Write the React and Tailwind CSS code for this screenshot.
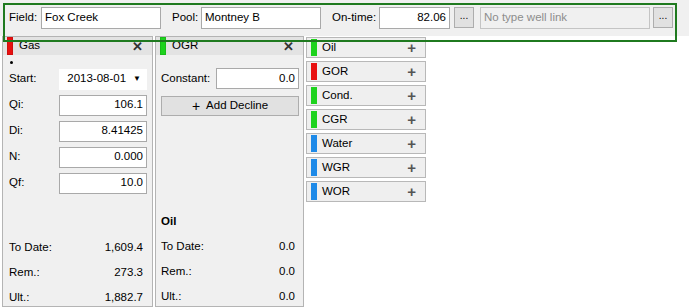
import React from "react";

const font = { fontFamily: '"Liberation Sans", Arial, sans-serif' };

function Input({ value, className = "" }) {
  return (
    <div className={`h-[21px] bg-white border border-[#a9a9a9] flex items-center justify-end px-[3px] text-black ${className}`}>
      {value}
    </div>
  );
}

function Dots({ className = "" }) {
  return (
    <div className={`w-[20px] h-[21px] bg-[#e1e1e1] border border-[#adadad] flex items-center justify-center text-[10px] leading-none text-black pb-[3px] ${className}`}>...</div>
  );
}

function Header({ color, name }) {
  return (
    <div className="h-[21px] bg-[#e3e3e3] flex items-center">
      <div className="w-[6px] h-[18px] ml-[4px] border border-black/10" style={{ background: color }} />
      <span className="ml-[6px]">{name}</span>
      <span className="ml-auto mr-[9px] text-[13px] font-bold text-[#333] leading-none">✕</span>
    </div>
  );
}

function Row({ label, value }) {
  return (
    <div className="h-[25px] flex items-center justify-between pr-[4px]">
      <span>{label}</span>
      <span>{value}</span>
    </div>
  );
}

function SideItem({ color, name }) {
  return (
    <div className="h-[21px] w-[120px] bg-[#efefef] border border-[#b8b8b8] flex items-center">
      <div className="w-[6px] h-[17px] ml-[4px]" style={{ background: color }} />
      <span className="ml-[5px]">{name}</span>
      <span className="ml-auto mr-[9px] text-[15px] font-bold text-[#555] leading-none">+</span>
    </div>
  );
}

export default function App() {
  return (
    <div className="w-[689px] h-[307px] bg-white relative overflow-hidden text-black text-[11.5px]" style={font}>
      {/* top bar */}
      <div className="h-[36px] bg-[#f0f0f0] flex items-center pl-[9px] pb-[1px]">
        <span className="w-[32px]">Field:</span>
        <div className="w-[120px] h-[22px] bg-white border border-[#a9a9a9] flex items-center px-[3px]">Fox Creek</div>
        <span className="ml-[11px] w-[29px]">Pool:</span>
        <div className="w-[120px] h-[22px] bg-white border border-[#a9a9a9] flex items-center px-[3px]">Montney B</div>
        <span className="ml-[11px] w-[47px]">On-time:</span>
        <Input value="82.06" className="w-[71px] h-[22px]" />
        <Dots className="ml-[4px]" />
        <div className="ml-[6px] w-[170px] h-[22px] bg-[#f0f0f0] border border-[#c4c4c4] flex items-center px-[3px] text-[#8d8d8d]">No type well link</div>
        <Dots className="ml-[3px]" />
      </div>

      {/* main */}
      <div className="flex items-start">
        {/* Gas panel */}
        <div className="ml-[2px] w-[151px] h-[271px] bg-[#f0f0f0] border border-[#b4b4b4] flex flex-col">
          <Header color="#e81010" name="Gas" />
          <div className="pl-[6px] pr-[5px] flex flex-col">
            <div className="h-[11px] relative"><div className="absolute left-[1px] top-[6px] w-[3px] h-[3px] rounded-full bg-black" /></div>
            <div className="h-[26px] flex items-center justify-between">
              <span>Start:</span>
              <div className="w-[88px] h-[21px] bg-white flex items-center justify-end pr-[6px]">
                <span>2013-08-01</span>
                <span className="ml-[7px] text-[8px]">▼</span>
              </div>
            </div>
            {[["Qi:", "106.1"], ["Di:", "8.41425"], ["N:", "0.000"], ["Qf:", "10.0"]].map(([l, v]) => (
              <div key={l} className="h-[26px] flex items-center justify-between">
                <span>{l}</span>
                <Input value={v} className="w-[88px]" />
              </div>
            ))}
            <div className="h-[39px]" />
            <Row label="To Date:" value="1,609.4" />
            <Row label="Rem.:" value="273.3" />
            <Row label="Ult.:" value="1,882.7" />
          </div>
        </div>

        {/* OGR panel */}
        <div className="ml-[2px] w-[149px] h-[271px] bg-[#f0f0f0] border border-[#b4b4b4] flex flex-col">
          <Header color="#1ed31e" name="OGR" />
          <div className="pl-[5px] pr-[4px] flex flex-col">
            <div className="h-[12px]" />
            <div className="h-[23px] flex items-center justify-between">
              <span>Constant:</span>
              <Input value="0.0" className="w-[83px]" />
            </div>
            <div className="mt-[6px] h-[20px] bg-[#e1e1e1] border border-[#adadad] flex items-center justify-center">
              <span className="text-[14px] leading-none mr-[6px]">+</span>Add Decline
            </div>
            <div className="h-[94px]" />
            <div className="h-[24px] flex items-center font-bold">Oil</div>
            <Row label="To Date:" value="0.0" />
            <Row label="Rem.:" value="0.0" />
            <Row label="Ult.:" value="0.0" />
          </div>
        </div>

        {/* side list */}
        <div className="ml-[2px] flex flex-col gap-[3px] pt-[1px]">
          <SideItem color="#1ed31e" name="Oil" />
          <SideItem color="#e81010" name="GOR" />
          <SideItem color="#1ed31e" name="Cond." />
          <SideItem color="#1ed31e" name="CGR" />
          <SideItem color="#1e8ae8" name="Water" />
          <SideItem color="#1e8ae8" name="WGR" />
          <SideItem color="#1e8ae8" name="WOR" />
        </div>
      </div>

      {/* green highlight overlay */}
      <div className="absolute left-[3px] top-[3px] w-[674px] h-[39px] border-[2px] border-[#1f7a1f] pointer-events-none" />
    </div>
  );
}
